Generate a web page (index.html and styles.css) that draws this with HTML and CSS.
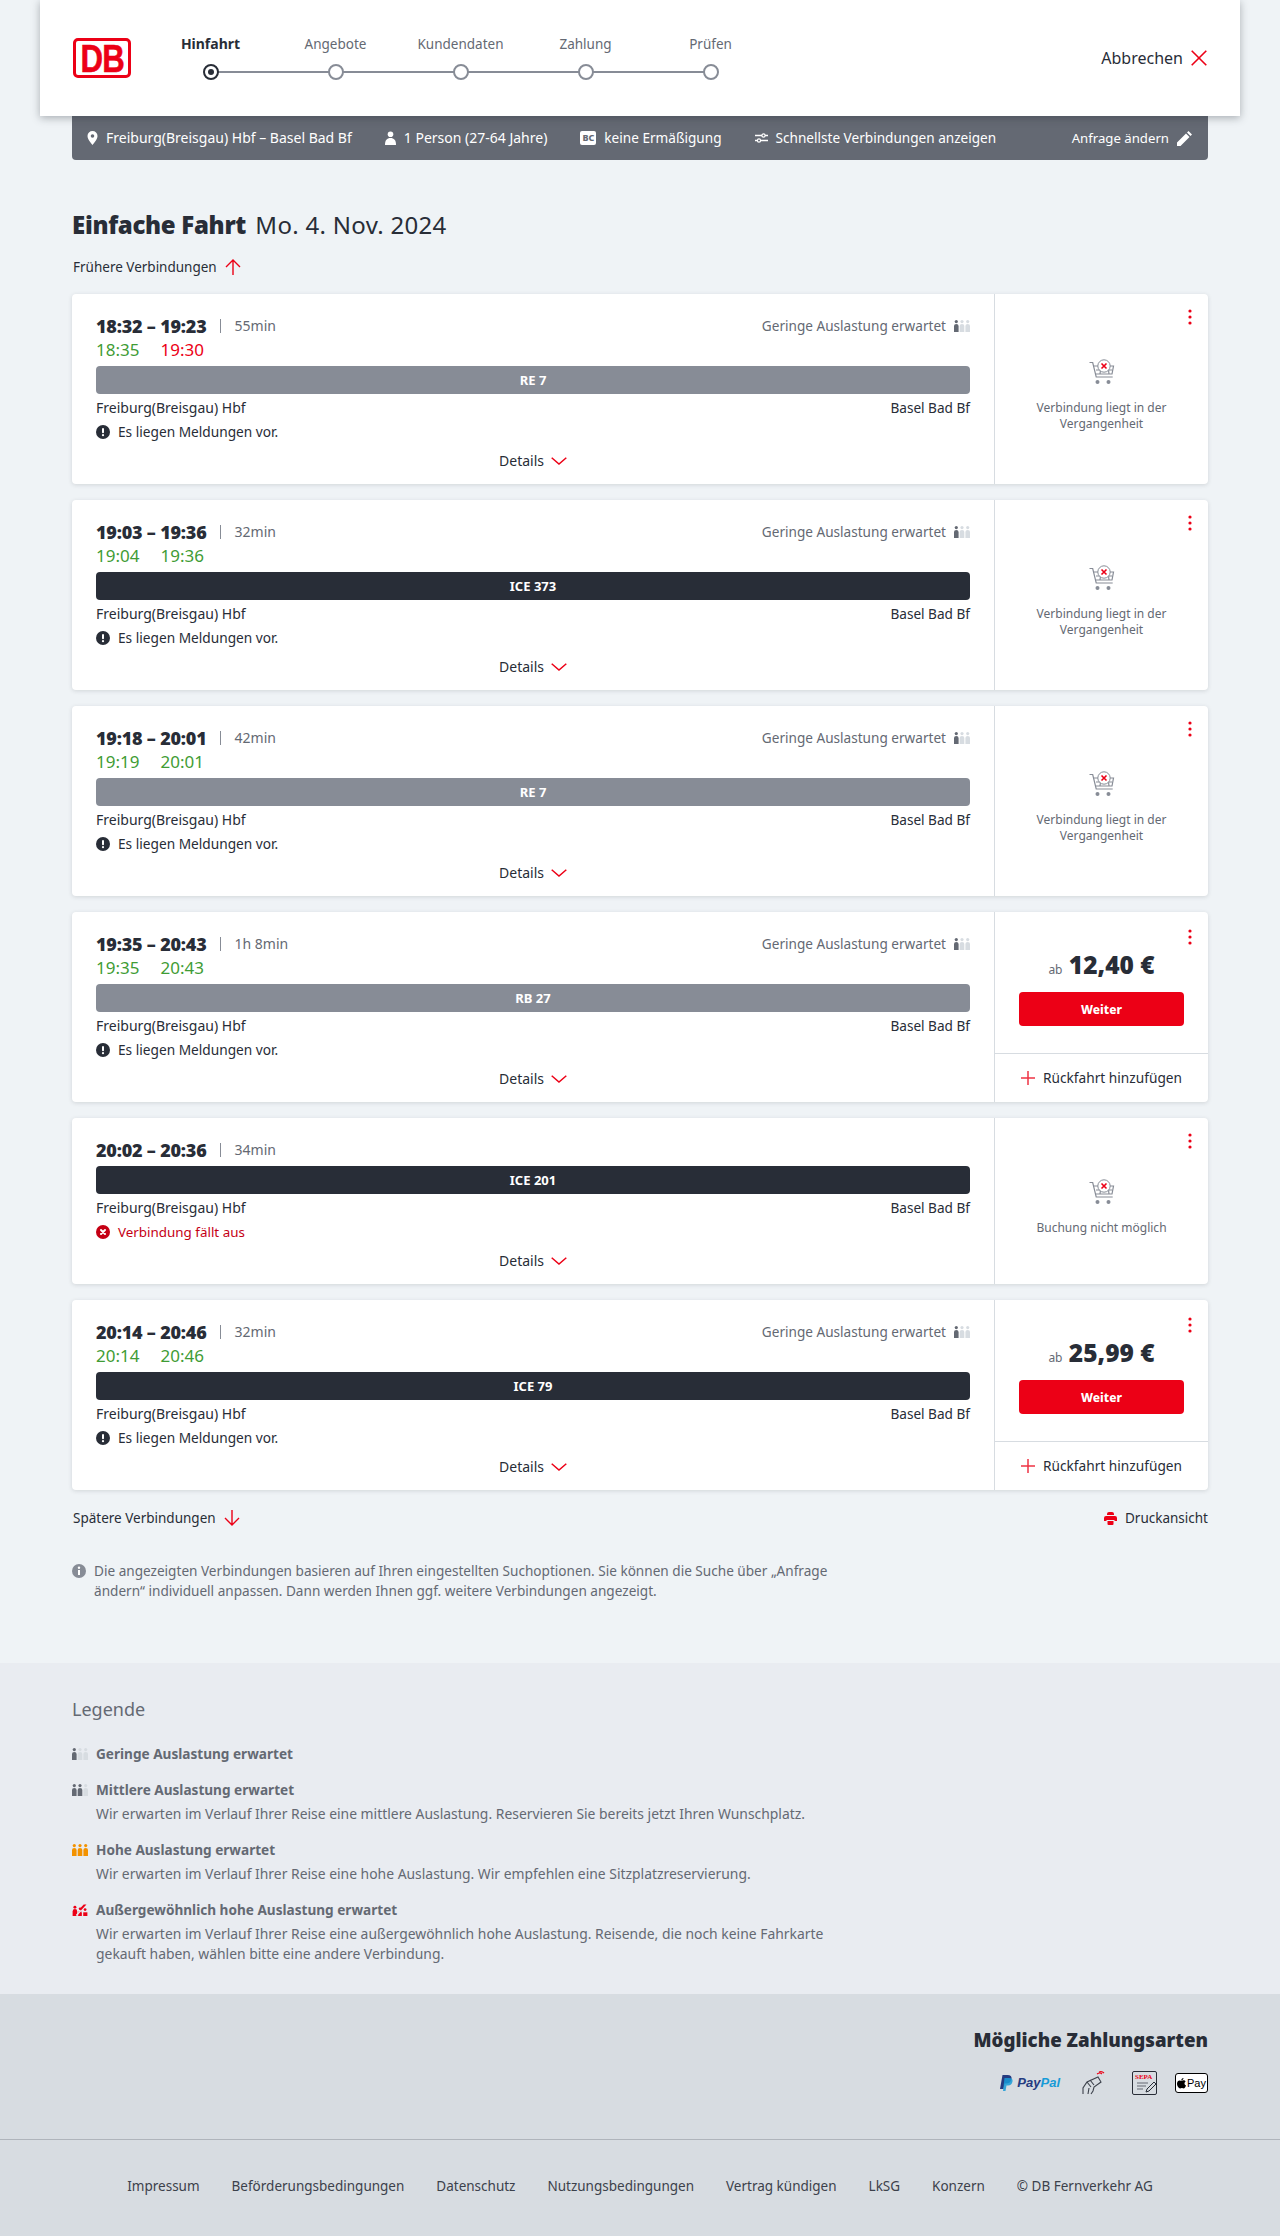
FILE: index.html
```html
<!DOCTYPE html>
<html lang="de">
<head>
  <meta charset="UTF-8">
  <meta name="viewport" content="width=device-width, initial-scale=1.0">
  <title>Verbindungen - Hinfahrt</title>
  <link rel="stylesheet" href="styles.css">
</head>
<body>

<svg class="icon-defs" aria-hidden="true">
  <symbol id="i-load-1" viewBox="0 0 16 12">
    <g fill="#646973"><circle cx="2.3" cy="1.6" r="1.6"/><path d="M0 6q0-2 2.3-2t2.3 2v6H0z"/></g>
    <g fill="#d7dce1"><circle cx="8" cy="1.6" r="1.6"/><path d="M5.7 6q0-2 2.3-2t2.3 2v6H5.700z"/><circle cx="13.700" cy="1.6" r="1.6"/><path d="M11.400 6q0-2 2.300-2t2.300 2v6h-4.600z"/></g>
  </symbol>
  <symbol id="i-load-2" viewBox="0 0 16 12">
    <g fill="#646973"><circle cx="2.3" cy="1.6" r="1.6"/><path d="M0 6q0-2 2.3-2t2.3 2v6H0z"/><circle cx="8" cy="1.6" r="1.6"/><path d="M5.7 6q0-2 2.3-2t2.3 2v6H5.700z"/></g>
    <g fill="#d7dce1"><circle cx="13.700" cy="1.6" r="1.6"/><path d="M11.400 6q0-2 2.300-2t2.300 2v6h-4.600z"/></g>
  </symbol>
  <symbol id="i-load-3" viewBox="0 0 16 12">
    <g fill="#f39200"><circle cx="2.3" cy="1.6" r="1.6"/><path d="M0 6q0-2 2.3-2t2.3 2v6H0z"/><circle cx="8" cy="1.6" r="1.6"/><path d="M5.700 6q0-2 2.300-2t2.300 2v6H5.700z"/><circle cx="13.700" cy="1.6" r="1.6"/><path d="M11.400 6q0-2 2.300-2t2.300 2v6h-4.600z"/></g>
  </symbol>
  <symbol id="i-load-4" viewBox="0 0 16 13">
    <g fill="#ec0016"><circle cx="2.500" cy="3.500" r="1.600"/><path d="M0 8q0-2.500 2.500-2.500T5 8v5H0z"/><circle cx="8" cy="5" r="1.300"/><path d="M6 10q0-2.500 2-2.500t2 2.500v3H6z"/><path d="M11.500 9h4.500v4h-4.500z"/><circle cx="13.500" cy="6" r="1.500"/></g>
    <path d="M4 12.500 15 .5" stroke="#e9ecf1" stroke-width="1.500"/>
    <path d="M7 6 12 .5h3L9 7z" fill="#ec0016"/>
  </symbol>
  <symbol id="i-cart" viewBox="0 0 26 26">
    <g fill="none" stroke="#878c96" stroke-width="1.200">
      <path d="M.5 3.500h3.200l3.500 14.500h16.500"/>
      <path d="M4.500 7h20l-1.500 8H7"/>
      <path d="M7 11h16M12 7l-1 8M19 7l1 8"/>
    </g>
    <circle cx="8.500" cy="23" r="2" fill="#878c96"/>
    <circle cx="19.500" cy="23" r="2" fill="#878c96"/>
    <circle cx="15" cy="7" r="6.200" fill="#fff" stroke="#878c96" stroke-width="1"/>
    <path d="M12.500 4.500l5 5M17.500 4.500l-5 5" stroke="#ec0016" stroke-width="1.600"/>
  </symbol>
  <symbol id="i-warn" viewBox="0 0 14 14">
    <circle cx="7" cy="7" r="7" fill="#282d37"/>
    <rect x="6" y="3" width="2" height="5.200" rx="1" fill="#fff"/>
    <circle cx="7" cy="10.200" r="1.100" fill="#fff"/>
  </symbol>
  <symbol id="i-cancel" viewBox="0 0 14 14">
    <circle cx="7" cy="7" r="7" fill="#c50014"/>
    <path d="M5 5l4 4M9 5l-4 4" stroke="#fff" stroke-width="2" stroke-linecap="round"/>
  </symbol>
  <symbol id="i-down" viewBox="0 0 16 8">
    <path d="M.7.700 8 7l7.300-6.300" fill="none" stroke="#ec0016" stroke-width="1.500"/>
  </symbol>
  <symbol id="i-plus" viewBox="0 0 14 14">
    <path d="M7 0v14M0 7h14" stroke="#ec0016" stroke-width="1.500" opacity=".8"/>
  </symbol>
  <symbol id="i-dots" viewBox="0 0 4 16">
    <circle cx="2" cy="2" r="1.600" fill="#ec0016"/><circle cx="2" cy="8" r="1.600" fill="#ec0016"/><circle cx="2" cy="14" r="1.600" fill="#ec0016"/>
  </symbol>
</svg>

<header class="topbar">
  <div class="db-logo"><span>DB</span></div>
  <ol class="stepper">
    <li class="step step-active"><span class="step-label">Hinfahrt</span><span class="step-dot"></span></li>
    <li class="step"><span class="step-label">Angebote</span><span class="step-dot"></span></li>
    <li class="step"><span class="step-label">Kundendaten</span><span class="step-dot"></span></li>
    <li class="step"><span class="step-label">Zahlung</span><span class="step-dot"></span></li>
    <li class="step"><span class="step-label">Prüfen</span><span class="step-dot"></span></li>
  </ol>
  <a class="cancel-link">Abbrechen
    <svg width="16" height="16" viewBox="0 0 16 16"><path d="M.7.700l14.600 14.600M15.300.700.700 15.300" stroke="#ec0016" stroke-width="1.600"/></svg>
  </a>
</header>

<div class="page">
  <div class="query-bar">
    <span class="query-item">
      <svg width="11" height="14" viewBox="0 0 11 14"><path fill-rule="evenodd" d="M5.500 0A5 5 0 0 1 10.500 5c0 3.500-5 9-5 9s-5-5.500-5-9a5 5 0 0 1 5-5zm0 3.200a1.800 1.800 0 1 0 0 3.600 1.800 1.800 0 0 0 0-3.600z" fill="#fff"/></svg>
      Freiburg(Breisgau) Hbf – Basel Bad Bf
    </span>
    <span class="query-item">
      <svg width="11" height="14" viewBox="0 0 11 14"><circle cx="5.500" cy="3.200" r="2.800" fill="#fff"/><path d="M0 14c0-5 2-7 5.500-7s5.500 2 5.500 7z" fill="#fff"/></svg>
      1 Person (27-64 Jahre)
    </span>
    <span class="query-item query-small">
      <span class="bc-badge">BC</span>
      keine Ermäßigung
    </span>
    <span class="query-item query-small">
      <svg width="13" height="10" viewBox="0 0 13 10"><path d="M0 2.500h7M10 2.500h3M0 7.500h2.500M6 7.500h7" stroke="#fff" stroke-width="1.500"/><circle cx="8.500" cy="2.500" r="1.600" fill="none" stroke="#fff" stroke-width="1.200"/><circle cx="4" cy="7.500" r="1.600" fill="none" stroke="#fff" stroke-width="1.200"/></svg>
      Schnellste Verbindungen anzeigen
    </span>
    <a class="query-item query-edit">Anfrage ändern
      <svg width="15" height="15" viewBox="0 0 15 15"><path d="M0 15V11.500L9 2.500l3.500 3.500L3.500 15zM10 1.500 11.500 0 15 3.500 13.500 5z" fill="#fff"/></svg>
    </a>
  </div>

  <h1 class="page-title"><strong>Einfache Fahrt</strong> <span>Mo. 4. Nov. 2024</span></h1>

  <a class="page-link earlier">Frühere Verbindungen
    <svg width="16" height="16" viewBox="0 0 16 16"><path d="M8 16V1M1 8l7-7 7 7" fill="none" stroke="#ec0016" stroke-width="1.400"/></svg>
  </a>

  <div class="results">

    <article class="card">
      <div class="trip">
        <div class="trip-head">
          <span class="trip-time">18:32 – 19:23</span><span class="trip-dur">55min</span>
          <span class="trip-load">Geringe Auslastung erwartet <svg class="load-icon"><use href="#i-load-1"/></svg></span>
        </div>
        <div class="trip-live"><span class="ontime">18:35</span><span class="late">19:30</span></div>
        <div class="train train-regio">RE 7</div>
        <div class="trip-stations"><span>Freiburg(Breisgau) Hbf</span><span>Basel Bad Bf</span></div>
        <div class="trip-note"><svg class="note-icon"><use href="#i-warn"/></svg>Es liegen Meldungen vor.</div>
        <div class="trip-details">Details <svg class="chevron"><use href="#i-down"/></svg></div>
      </div>
      <div class="offer offer-msg">
        <svg class="dots"><use href="#i-dots"/></svg>
        <svg class="cart"><use href="#i-cart"/></svg>
        <p>Verbindung liegt in der Vergangenheit</p>
      </div>
    </article>

    <article class="card">
      <div class="trip">
        <div class="trip-head">
          <span class="trip-time">19:03 – 19:36</span><span class="trip-dur">32min</span>
          <span class="trip-load">Geringe Auslastung erwartet <svg class="load-icon"><use href="#i-load-1"/></svg></span>
        </div>
        <div class="trip-live"><span class="ontime">19:04</span><span class="ontime">19:36</span></div>
        <div class="train train-long">ICE 373</div>
        <div class="trip-stations"><span>Freiburg(Breisgau) Hbf</span><span>Basel Bad Bf</span></div>
        <div class="trip-note"><svg class="note-icon"><use href="#i-warn"/></svg>Es liegen Meldungen vor.</div>
        <div class="trip-details">Details <svg class="chevron"><use href="#i-down"/></svg></div>
      </div>
      <div class="offer offer-msg">
        <svg class="dots"><use href="#i-dots"/></svg>
        <svg class="cart"><use href="#i-cart"/></svg>
        <p>Verbindung liegt in der Vergangenheit</p>
      </div>
    </article>

    <article class="card">
      <div class="trip">
        <div class="trip-head">
          <span class="trip-time">19:18 – 20:01</span><span class="trip-dur">42min</span>
          <span class="trip-load">Geringe Auslastung erwartet <svg class="load-icon"><use href="#i-load-1"/></svg></span>
        </div>
        <div class="trip-live"><span class="ontime">19:19</span><span class="ontime">20:01</span></div>
        <div class="train train-regio">RE 7</div>
        <div class="trip-stations"><span>Freiburg(Breisgau) Hbf</span><span>Basel Bad Bf</span></div>
        <div class="trip-note"><svg class="note-icon"><use href="#i-warn"/></svg>Es liegen Meldungen vor.</div>
        <div class="trip-details">Details <svg class="chevron"><use href="#i-down"/></svg></div>
      </div>
      <div class="offer offer-msg">
        <svg class="dots"><use href="#i-dots"/></svg>
        <svg class="cart"><use href="#i-cart"/></svg>
        <p>Verbindung liegt in der Vergangenheit</p>
      </div>
    </article>

    <article class="card">
      <div class="trip">
        <div class="trip-head">
          <span class="trip-time">19:35 – 20:43</span><span class="trip-dur">1h 8min</span>
          <span class="trip-load">Geringe Auslastung erwartet <svg class="load-icon"><use href="#i-load-1"/></svg></span>
        </div>
        <div class="trip-live"><span class="ontime">19:35</span><span class="ontime">20:43</span></div>
        <div class="train train-regio">RB 27</div>
        <div class="trip-stations"><span>Freiburg(Breisgau) Hbf</span><span>Basel Bad Bf</span></div>
        <div class="trip-note"><svg class="note-icon"><use href="#i-warn"/></svg>Es liegen Meldungen vor.</div>
        <div class="trip-details">Details <svg class="chevron"><use href="#i-down"/></svg></div>
      </div>
      <div class="offer offer-price">
        <svg class="dots"><use href="#i-dots"/></svg>
        <div class="offer-main">
          <div class="price"><small>ab</small> 12,40 €</div>
          <button class="btn-next">Weiter</button>
        </div>
        <div class="offer-return"><svg class="plus"><use href="#i-plus"/></svg>Rückfahrt hinzufügen</div>
      </div>
    </article>

    <article class="card">
      <div class="trip">
        <div class="trip-head">
          <span class="trip-time">20:02 – 20:36</span><span class="trip-dur">34min</span>
        </div>
        <div class="train train-long">ICE 201</div>
        <div class="trip-stations"><span>Freiburg(Breisgau) Hbf</span><span>Basel Bad Bf</span></div>
        <div class="trip-note trip-note-cancel"><svg class="note-icon"><use href="#i-cancel"/></svg>Verbindung fällt aus</div>
        <div class="trip-details">Details <svg class="chevron"><use href="#i-down"/></svg></div>
      </div>
      <div class="offer offer-msg offer-msg-short">
        <svg class="dots"><use href="#i-dots"/></svg>
        <svg class="cart"><use href="#i-cart"/></svg>
        <p>Buchung nicht möglich</p>
      </div>
    </article>

    <article class="card">
      <div class="trip">
        <div class="trip-head">
          <span class="trip-time">20:14 – 20:46</span><span class="trip-dur">32min</span>
          <span class="trip-load">Geringe Auslastung erwartet <svg class="load-icon"><use href="#i-load-1"/></svg></span>
        </div>
        <div class="trip-live"><span class="ontime">20:14</span><span class="ontime">20:46</span></div>
        <div class="train train-long">ICE 79</div>
        <div class="trip-stations"><span>Freiburg(Breisgau) Hbf</span><span>Basel Bad Bf</span></div>
        <div class="trip-note"><svg class="note-icon"><use href="#i-warn"/></svg>Es liegen Meldungen vor.</div>
        <div class="trip-details">Details <svg class="chevron"><use href="#i-down"/></svg></div>
      </div>
      <div class="offer offer-price">
        <svg class="dots"><use href="#i-dots"/></svg>
        <div class="offer-main">
          <div class="price"><small>ab</small> 25,99 €</div>
          <button class="btn-next">Weiter</button>
        </div>
        <div class="offer-return"><svg class="plus"><use href="#i-plus"/></svg>Rückfahrt hinzufügen</div>
      </div>
    </article>

  </div>

  <div class="results-foot">
    <a class="page-link">Spätere Verbindungen
      <svg width="16" height="16" viewBox="0 0 16 16"><path d="M8 0v15M1 8l7 7 7-7" fill="none" stroke="#ec0016" stroke-width="1.400"/></svg>
    </a>
    <a class="page-link print-link">
      <svg width="13" height="13" viewBox="0 0 13 13"><path d="M3 2a2 2 0 0 1 2-2h3a2 2 0 0 1 2 2v1H3zM2 4h9a2 2 0 0 1 2 2v3h-2.500V8h-8v1H0V6a2 2 0 0 1 2-2z" fill="#ec0016"/><path d="M3.500 9h6v3a1 1 0 0 1-1 1h-4a1 1 0 0 1-1-1z" fill="#ec0016"/></svg>
      Druckansicht
    </a>
  </div>

  <div class="info-note">
    <svg width="14" height="14" viewBox="0 0 14 14"><circle cx="7" cy="7" r="7" fill="#878c96"/><rect x="6" y="6" width="2" height="5" fill="#fff"/><circle cx="7" cy="3.800" r="1.200" fill="#fff"/></svg>
    <p>Die angezeigten Verbindungen basieren auf Ihren eingestellten Suchoptionen. Sie können die Suche über „Anfrage ändern“ individuell anpassen. Dann werden Ihnen ggf. weitere Verbindungen angezeigt.</p>
  </div>
</div>

<section class="legend">
  <div class="legend-inner">
    <h2>Legende</h2>
    <div class="legend-item">
      <svg class="load-icon"><use href="#i-load-1"/></svg>
      <div><h3>Geringe Auslastung erwartet</h3></div>
    </div>
    <div class="legend-item">
      <svg class="load-icon"><use href="#i-load-2"/></svg>
      <div>
        <h3>Mittlere Auslastung erwartet</h3>
        <p>Wir erwarten im Verlauf Ihrer Reise eine mittlere Auslastung. Reservieren Sie bereits jetzt Ihren Wunschplatz.</p>
      </div>
    </div>
    <div class="legend-item">
      <svg class="load-icon"><use href="#i-load-3"/></svg>
      <div>
        <h3>Hohe Auslastung erwartet</h3>
        <p>Wir erwarten im Verlauf Ihrer Reise eine hohe Auslastung. Wir empfehlen eine Sitzplatzreservierung.</p>
      </div>
    </div>
    <div class="legend-item">
      <svg class="load-icon"><use href="#i-load-4"/></svg>
      <div>
        <h3>Außergewöhnlich hohe Auslastung erwartet</h3>
        <p>Wir erwarten im Verlauf Ihrer Reise eine außergewöhnlich hohe Auslastung. Reisende, die noch keine Fahrkarte gekauft haben, wählen bitte eine andere Verbindung.</p>
      </div>
    </div>
  </div>
</section>

<section class="payment">
  <div class="payment-inner">
    <h2>Mögliche Zahlungsarten</h2>
    <div class="payment-icons">
      <span class="pay-paypal">
        <svg width="13" height="16" viewBox="0 0 13 16"><path d="M2.500 0h5c3 0 4.500 1.500 4 4-.5 3-2.500 4.500-5.500 4.500H4.500L3.500 14H0z" fill="#253b80"/><path d="M4.500 3h4.500c2.500 0 4 1 3.500 3.500-.5 2.500-2 4-4.500 4H6.500L5.500 16H3z" fill="#179bd7" opacity=".85"/></svg>
        <span class="pay-word">Pay<em>Pal</em></span>
      </span>
      <svg class="pay-nfc" width="23" height="24" viewBox="0 0 23 24">
        <g fill="none" stroke="#3c414b" stroke-width="1.100">
          <path d="M1 23v-6l4-6 11-5 3 5-7 5-1 4-2 3"/>
          <path d="M5 11l4 5M8 9l4 5M6 23l1-6"/>
        </g>
        <path d="M15 3q3-2 5 0M17 1q3-1 5 1" fill="none" stroke="#ec0016" stroke-width="1.100"/>
      </svg>
      <span class="pay-sepa">
        <span>SEPA</span>
        <svg width="23" height="13" viewBox="0 0 23 13"><path d="M2 2h11M2 5h9M2 8h6" stroke="#646973" stroke-width="1"/><path d="M11 11l1-3 7-7 2 2-7 7z" fill="#d7dce1" stroke="#282d37" stroke-width="1"/></svg>
      </span>
      <span class="pay-apple">
        <svg width="9" height="11" viewBox="0 0 9 11"><path d="M6.500 0c.1 1-.9 2.300-2.200 2.200C4.200 1.100 5.300.1 6.500 0zM4.400 2.800c.6 0 1.300-.5 2.200-.5.800 0 1.600.4 2 1.100-1.700 1-1.400 3.300.4 4-.4 1.200-1.400 3-2.500 3-.6 0-.9-.4-1.700-.4s-1.100.4-1.700.4C1.900 10.400 0 8 0 5.700 0 3.600 1.300 2.400 2.600 2.400c.7 0 1.300.4 1.800.4z" fill="#000"/></svg>Pay
      </span>
    </div>
  </div>
</section>

<footer class="site-foot">
  <a>Impressum</a>
  <a>Beförderungsbedingungen</a>
  <a>Datenschutz</a>
  <a>Nutzungsbedingungen</a>
  <a>Vertrag kündigen</a>
  <a>LkSG</a>
  <a>Konzern</a>
  <a>© DB Fernverkehr AG</a>
</footer>

</body>
</html>
```

FILE: styles.css
```css
* {
  box-sizing: border-box;
}

body {
  font-family: "Noto Sans", "Open Sans", sans-serif;
  font-size: 14px;
  line-height: 20px;
  background-color: #eff3f6;
  margin: 0;
  color: #282d37;
}

h1, h2, h3, p, ol {
  margin: 0;
  padding: 0;
}

.icon-defs {
  display: none;
}

/* Kopfzeile */
.topbar {
  position: relative;
  z-index: 2;
  display: flex;
  align-items: center;
  height: 116px;
  margin: 0 40px;
  padding: 0 33px;
  background-color: #fff;
  box-shadow: 0 2px 8px rgba(40,45,55,0.35);
}

.db-logo {
  display: flex;
  align-items: center;
  justify-content: center;
  flex: none;
  width: 58px;
  height: 40px;
  border: 3px solid #ec0016;
  border-radius: 5px;
  color: #ec0016;
  font-family: "Liberation Sans", sans-serif;
  font-size: 39px;
  font-weight: 700;
  line-height: 1;
}

.db-logo span {
  transform: scaleX(0.8);
  letter-spacing: -1px;
  -webkit-text-stroke: 0.6px #ec0016;
}

.stepper {
  display: flex;
  align-self: flex-start;
  list-style: none;
  margin: 34px 0 0 17px;
}

.step {
  position: relative;
  display: flex;
  flex-direction: column;
  align-items: center;
  width: 125px;
  color: #646973;
  font-size: 13.5px;
}

.step-label {
  margin-bottom: 10px;
}

.step-active {
  color: #282d37;
  font-size: 14px;
  font-weight: 700;
}

.step-dot {
  position: relative;
  z-index: 1;
  width: 16px;
  height: 16px;
  border: 2px solid #878c96;
  border-radius: 50%;
  background-color: #fff;
}

.step-active .step-dot {
  border-color: #282d37;
}

.step-active .step-dot::after {
  content: "";
  display: block;
  width: 6px;
  height: 6px;
  margin: 3px;
  border-radius: 50%;
  background-color: #282d37;
}

.step::after {
  content: "";
  position: absolute;
  top: 37px;
  left: 50%;
  width: 125px;
  height: 2px;
  background-color: #878c96;
}

.step:last-child::after {
  display: none;
}

.cancel-link {
  display: flex;
  align-items: center;
  gap: 8px;
  margin-left: auto;
  font-size: 16px;
}

/* Suchanfrage */
.page {
  width: 1136px;
  margin: 0 auto;
}

.query-bar {
  display: flex;
  align-items: center;
  gap: 33px;
  height: 44px;
  padding: 0 16px 0 15px;
  border-radius: 0 0 4px 4px;
  background-color: #646973;
  color: #fff;
}

.query-item {
  display: flex;
  align-items: center;
  gap: 8px;
  white-space: nowrap;
}

.query-small {
  font-size: 13.6px;
}

.query-edit {
  margin-left: auto;
  font-size: 13.2px;
}

.bc-badge {
  width: 16px;
  height: 14px;
  border-radius: 2px;
  background-color: #fff;
  color: #646973;
  font-size: 9px;
  font-weight: 800;
  line-height: 14px;
  text-align: center;
}

.page-title {
  margin-top: 49px;
  font-size: 24px;
  font-weight: 400;
  line-height: 32px;
}

.page-title strong {
  font-weight: 900;
  letter-spacing: -0.3px;
  margin-right: 3px;
}

.page-title span {
  letter-spacing: 0.3px;
}

.page-link {
  display: flex;
  align-items: center;
  gap: 8px;
  padding-left: 1px;
  font-size: 13.5px;
}

.earlier {
  margin-top: 16px;
}

/* Verbindungen */
.results {
  display: flex;
  flex-direction: column;
  gap: 16px;
  margin-top: 17px;
}

.card {
  display: grid;
  grid-template-columns: 1fr 213px;
  border-radius: 4px;
  background-color: #fff;
  box-shadow: 0 1px 4px rgba(40,45,55,0.15);
}

.trip {
  padding: 21px 24px 13px;
  border-right: 1px solid #d7dce1;
}

.trip-head {
  display: flex;
  align-items: center;
  height: 23px;
  padding-bottom: 1px;
}

.trip-time {
  font-size: 18px;
  font-weight: 900;
  letter-spacing: -0.2px;
}

.trip-dur {
  margin-left: 13px;
  padding-left: 14px;
  color: #646973;
  font-size: 14px;
  line-height: 14px;
  border-left: 1px solid #878c96;
}

.trip-load {
  display: flex;
  align-items: center;
  gap: 8px;
  margin-left: auto;
  color: #646973;
  font-size: 13.6px;
}

.load-icon {
  flex: none;
  width: 16px;
  height: 12px;
}

.trip-live {
  display: flex;
  gap: 21px;
  height: 24px;
  font-size: 17px;
  line-height: 24px;
}

.ontime {
  color: #3f9c35;
}

.late {
  color: #ec0016;
}

.train {
  height: 28px;
  margin-top: 4px;
  border-radius: 4px;
  color: #fff;
  font-size: 13px;
  font-weight: 700;
  line-height: 28px;
  text-align: center;
}

.train-regio {
  background-color: #878c96;
}

.train-long {
  background-color: #282d37;
}

.trip-stations {
  display: flex;
  justify-content: space-between;
  margin-top: 4px;
}

.trip-stations span:last-child {
  font-size: 13.6px;
}

.trip-note {
  display: flex;
  align-items: center;
  gap: 8px;
  margin-top: 4px;
  font-size: 13.7px;
}

.trip-note-cancel {
  color: #c50014;
  font-size: 13.4px;
}

.note-icon {
  flex: none;
  width: 14px;
  height: 14px;
}

.trip-details {
  display: flex;
  align-items: center;
  justify-content: center;
  gap: 7px;
  margin-top: 9px;
}

.chevron {
  width: 16px;
  height: 8px;
}

.offer {
  position: relative;
  display: flex;
  flex-direction: column;
  align-items: center;
  color: #646973;
}

.dots {
  position: absolute;
  top: 15px;
  right: 16px;
  width: 4px;
  height: 16px;
}

.offer-price .dots {
  top: 17px;
}

.offer-msg {
  padding-top: 65px;
  font-size: 12px;
  line-height: 16px;
  text-align: center;
}

.offer-msg-short {
  padding-top: 61px;
}

.cart {
  width: 26px;
  height: 26px;
  margin-bottom: 15px;
}

.offer-msg p {
  width: 150px;
}

.offer-main {
  display: flex;
  flex-direction: column;
  align-items: center;
  align-self: stretch;
  height: 142px;
  padding-top: 37px;
  border-bottom: 1px solid #d7dce1;
}

.price {
  color: #282d37;
  font-size: 24.5px;
  font-weight: 900;
  line-height: 32px;
}

.price small {
  color: #646973;
  font-size: 12px;
  font-weight: 400;
}

.btn-next {
  width: 165px;
  height: 34px;
  margin-top: 6px;
  border: none;
  border-radius: 4px;
  background-color: #ec0016;
  color: #fff;
  font-family: inherit;
  font-size: 12px;
  font-weight: 800;
}

.offer-return {
  display: flex;
  flex: 1;
  align-items: center;
  justify-content: center;
  gap: 8px;
  color: #282d37;
  font-size: 13.7px;
}

.plus {
  width: 14px;
  height: 14px;
}

.results-foot {
  display: flex;
  justify-content: space-between;
  margin-top: 18px;
}

.print-link {
  padding-left: 0;
}

.info-note {
  display: flex;
  gap: 8px;
  margin-top: 33px;
  color: #646973;
  font-size: 13.6px;
}

.info-note svg {
  flex: none;
  margin-top: 3px;
}

.info-note p {
  width: 744px;
}

/* Legende */
.legend {
  margin-top: 62px;
  padding: 32px 0 30px;
  background-color: #e9ecf1;
  color: #646973;
}

.legend-inner,
.payment-inner {
  width: 1136px;
  margin: 0 auto;
}

.legend h2 {
  font-size: 18px;
  font-weight: 400;
  line-height: 28px;
  margin-bottom: 21px;
}

.legend-item {
  display: flex;
  gap: 8px;
  margin-top: 16px;
}

.legend-item .load-icon {
  margin-top: 4px;
}

.legend-item h3 {
  margin-bottom: 4px;
  font-size: 13.6px;
  font-weight: 700;
}

.legend-item h3:only-child {
  margin-bottom: 0;
}

.legend-item p {
  width: 750px;
  font-size: 13.9px;
}

/* Zahlungsarten */
.payment {
  height: 146px;
  padding-top: 32px;
  border-bottom: 1px solid #afb4bb;
  background-color: #d7dce1;
}

.payment-inner h2 {
  font-size: 18.7px;
  font-weight: 900;
  line-height: 28px;
  text-align: right;
}

.payment-icons {
  display: flex;
  align-items: center;
  justify-content: flex-end;
  height: 24px;
  margin-top: 17px;
}

.pay-paypal {
  display: flex;
  align-items: center;
  gap: 4px;
  color: #253b80;
  font-family: "Liberation Sans", sans-serif;
  font-size: 13px;
  font-style: italic;
  font-weight: 700;
}

.pay-word em {
  color: #179bd7;
}

.pay-nfc {
  margin-left: 22px;
}

.pay-sepa {
  display: flex;
  flex-direction: column;
  justify-content: flex-start;
  width: 25px;
  height: 24px;
  margin-left: 27px;
  padding: 1px 0 0 2px;
  border: 1px solid #282d37;
  border-radius: 2px;
  color: #ec0016;
  font-family: "Liberation Serif", serif;
  font-size: 7px;
  font-weight: 700;
  line-height: 8px;
  overflow: hidden;
}

.pay-apple {
  display: flex;
  align-items: center;
  justify-content: center;
  gap: 1px;
  width: 33px;
  height: 20px;
  margin-left: 18px;
  border: 1px solid #000;
  border-radius: 3px;
  background-color: #fff;
  color: #000;
  font-family: "Liberation Sans", sans-serif;
  font-size: 11px;
}

/* Fusszeile */
.site-foot {
  display: flex;
  justify-content: center;
  gap: 32px;
  height: 97px;
  padding-top: 36px;
  background-color: #d7dce1;
  color: #3c414b;
  font-size: 13.5px;
}
```
